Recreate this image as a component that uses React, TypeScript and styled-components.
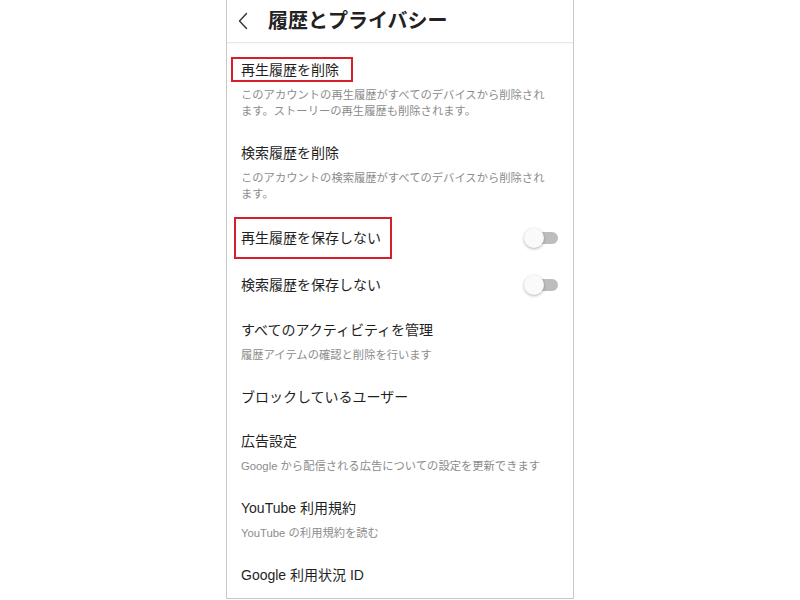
import React from 'react';
import styled, { createGlobalStyle } from 'styled-components';

const GlobalStyle = createGlobalStyle`
  html, body {
    margin: 0;
    padding: 0;
    background: #ffffff;
  }
  body {
    font-family: 'Liberation Sans', 'Noto Sans CJK JP', sans-serif;
  }
`;

type Item = {
  title: string;
  desc?: string;
  toggle?: boolean;
  mark?: { left: number; top: number; width: number; height: number };
};

const items: Item[] = [
  {
    title: '再生履歴を削除',
    desc: 'このアカウントの再生履歴がすべてのデバイスから削除されます。ストーリーの再生履歴も削除されます。',
    mark: { left: -10, top: -3, width: 122, height: 25 },
  },
  {
    title: '検索履歴を削除',
    desc: 'このアカウントの検索履歴がすべてのデバイスから削除されます。',
  },
  {
    title: '再生履歴を保存しない',
    toggle: true,
    mark: { left: -7, top: -11, width: 158, height: 42 },
  },
  { title: '検索履歴を保存しない', toggle: true },
  { title: 'すべてのアクティビティを管理', desc: '履歴アイテムの確認と削除を行います' },
  { title: 'ブロックしているユーザー' },
  { title: '広告設定', desc: 'Google から配信される広告についての設定を更新できます' },
  { title: 'YouTube 利用規約', desc: 'YouTube の利用規約を読む' },
  { title: 'Google 利用状況 ID' },
];

const App = () => {
  return (
    <>
      <GlobalStyle />
      <Phone>
        <Header>
          <BackButton>
            <svg width="10" height="18" viewBox="0 0 10 18" fill="none">
              <path d="M8.5 1.5 L1.5 9 L8.5 16.5" stroke="#333" strokeWidth="1.4" strokeLinecap="round" strokeLinejoin="round" />
            </svg>
          </BackButton>
          <HeaderTitle>履歴とプライバシー</HeaderTitle>
        </Header>
        <List>
          {items.map((item) => (
            <Row key={item.title} $toggle={!!item.toggle}>
              <RowText>
                <Title>
                  {item.title}
                  {item.mark && (
                    <Mark
                      style={{
                        left: item.mark.left,
                        top: item.mark.top,
                        width: item.mark.width,
                        height: item.mark.height,
                      }}
                    />
                  )}
                </Title>
                {item.desc && <Desc>{item.desc}</Desc>}
              </RowText>
              {item.toggle && (
                <Switch>
                  <Knob />
                </Switch>
              )}
            </Row>
          ))}
        </List>
      </Phone>
    </>
  );
};

export default App;

const Phone = styled.div`
  /* screen capture frame */
  box-sizing: border-box;
  width: 348px;
  height: 599px;
  margin: 0 auto;
  border: 1px solid #c9c9c9;
  border-top: none;
  overflow: hidden;
  background: #ffffff;
`;

const Header = styled.div`
  display: flex;
  align-items: center;
  height: 42px;
  padding-left: 11px;
  border-bottom: 1px solid #e6e6e6;
  box-shadow: 0 1px 2px rgba(0, 0, 0, 0.03);
`;

const BackButton = styled.div`
  display: flex;
  align-items: center;
  width: 10px;
  height: 18px;
  margin-right: 20px;
`;

const HeaderTitle = styled.div`
  font-family: 'Liberation Sans', 'Noto Sans CJK JP', sans-serif;
  font-weight: 700;
  font-size: 20px;
  line-height: 24px;
  color: #222222;
`;

const List = styled.div`
  display: flex;
  flex-direction: column;
  padding-top: 5px;
`;

const Row = styled.div<{ $toggle: boolean }>`
  display: flex;
  align-items: center;
  justify-content: space-between;
  padding: ${(p) => (p.$toggle ? '0 15px 0 14px' : '12px 15px 12px 14px')};
  height: ${(p) => (p.$toggle ? '47px' : 'auto')};
  box-sizing: border-box;
`;

const RowText = styled.div`
  display: flex;
  flex-direction: column;
  align-items: flex-start;
`;

const Title = styled.div`
  position: relative;
  font-size: 14px;
  line-height: 20px;
  color: #1f1f1f;
`;

const Mark = styled.span`
  /* red highlight frame drawn over the capture */
  position: absolute;
  box-sizing: border-box;
  border: 2px solid #d61f2c;
`;

const Desc = styled.div`
  max-width: 312px;
  margin-top: 7px;
  font-size: 11.3px;
  line-height: 16px;
  color: #8c8c8c;
`;

const Switch = styled.div`
  position: relative;
  width: 32px;
  height: 12px;
  border-radius: 6px;
  background: #bdbdbd;
  flex: none;
`;

const Knob = styled.div`
  position: absolute;
  left: -2px;
  top: -4px;
  width: 20px;
  height: 20px;
  border-radius: 50%;
  background: #fafafa;
  box-shadow: 0 1px 3px rgba(0, 0, 0, 0.3);
`;
